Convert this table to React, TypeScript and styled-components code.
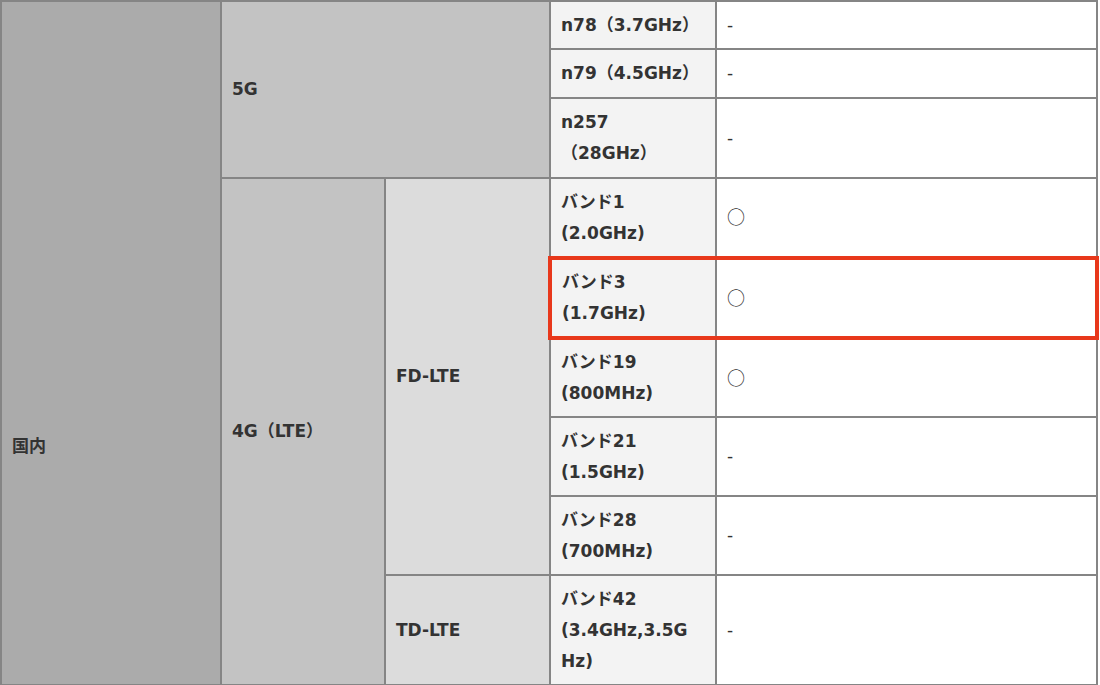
import styled, { createGlobalStyle } from 'styled-components';

const GlobalStyle = createGlobalStyle`
  html, body {
    margin: 0;
    padding: 0;
    background: #ffffff;
  }
  body {
    font-family: "DejaVu Sans", "Noto Sans CJK JP", sans-serif;
    color: #333333;
  }
`;

const Table = styled.table`
  border-collapse: collapse;
  width: 1099px;
  table-layout: fixed;
  font-size: 17px;
  line-height: 31px;
  font-weight: 700;
`;

const Row = styled.tr<{ $h: number }>`
  height: ${(p) => p.$h}px;
`;

const Cell = styled.td<{ $bg: string; $mark?: 'left' | 'right'; $padTop?: number }>`
  background: ${(p) => p.$bg};
  border: 2px solid #858585;
  padding: ${(p) => p.$padTop ?? 0}px 10px 0;
  vertical-align: middle;
  text-align: left;
  white-space: nowrap;
  ${(p) =>
    p.$mark === 'left' &&
    `
    border-top: 4px solid #e8381b;
    border-bottom: 4px solid #e8381b;
    border-left: 4px solid #e8381b;
  `}
  ${(p) =>
    p.$mark === 'right' &&
    `
    border-top: 4px solid #e8381b;
    border-bottom: 4px solid #e8381b;
    border-right: 4px solid #e8381b;
  `}
`;

const Mark = styled.span`
  font-family: "Noto Sans CJK JP", sans-serif;
  font-weight: 400;
  font-size: 18px;
`;

const Dash = styled.span`
  font-weight: 400;
`;

const C1 = '#ababab';
const C2 = '#c3c3c3';
const C3 = '#dcdcdc';
const C4 = '#f3f3f3';
const C5 = '#ffffff';

const None = () => <Dash>-</Dash>;
const Circle = () => <Mark>○</Mark>;

const App = () => {
  return (
    <>
      <GlobalStyle />
      <Table>
        <colgroup>
          <col style={{ width: 220 }} />
          <col style={{ width: 164 }} />
          <col style={{ width: 165 }} />
          <col style={{ width: 166 }} />
          <col />
        </colgroup>
        <tbody>
          <Row $h={48}>
            <Cell $bg={C1} rowSpan={9} $padTop={206}>国内</Cell>
            <Cell $bg={C2} rowSpan={3} colSpan={2}>5G</Cell>
            <Cell $bg={C4}>n78（3.7GHz）</Cell>
            <Cell $bg={C5}><None /></Cell>
          </Row>
          <Row $h={49}>
            <Cell $bg={C4}>n79（4.5GHz）</Cell>
            <Cell $bg={C5}><None /></Cell>
          </Row>
          <Row $h={80}>
            <Cell $bg={C4}>
              n257
              <br />
              （28GHz）
            </Cell>
            <Cell $bg={C5}><None /></Cell>
          </Row>
          <Row $h={80}>
            <Cell $bg={C2} rowSpan={6}>4G（LTE）</Cell>
            <Cell $bg={C3} rowSpan={5}>FD-LTE</Cell>
            <Cell $bg={C4}>
              バンド1
              <br />
              (2.0GHz)
            </Cell>
            <Cell $bg={C5}><Circle /></Cell>
          </Row>
          <Row $h={80}>
            <Cell $bg={C4} $mark="left">
              バンド3
              <br />
              (1.7GHz)
            </Cell>
            <Cell $bg={C5} $mark="right"><Circle /></Cell>
          </Row>
          <Row $h={79}>
            <Cell $bg={C4}>
              バンド19
              <br />
              (800MHz)
            </Cell>
            <Cell $bg={C5}><Circle /></Cell>
          </Row>
          <Row $h={79}>
            <Cell $bg={C4}>
              バンド21
              <br />
              (1.5GHz)
            </Cell>
            <Cell $bg={C5}><None /></Cell>
          </Row>
          <Row $h={79}>
            <Cell $bg={C4}>
              バンド28
              <br />
              (700MHz)
            </Cell>
            <Cell $bg={C5}><None /></Cell>
          </Row>
          <Row $h={110}>
            <Cell $bg={C3}>TD-LTE</Cell>
            <Cell $bg={C4}>
              バンド42
              <br />
              (3.4GHz,3.5G
              <br />
              Hz)
            </Cell>
            <Cell $bg={C5}><None /></Cell>
          </Row>
        </tbody>
      </Table>
    </>
  );
};

export default App;
